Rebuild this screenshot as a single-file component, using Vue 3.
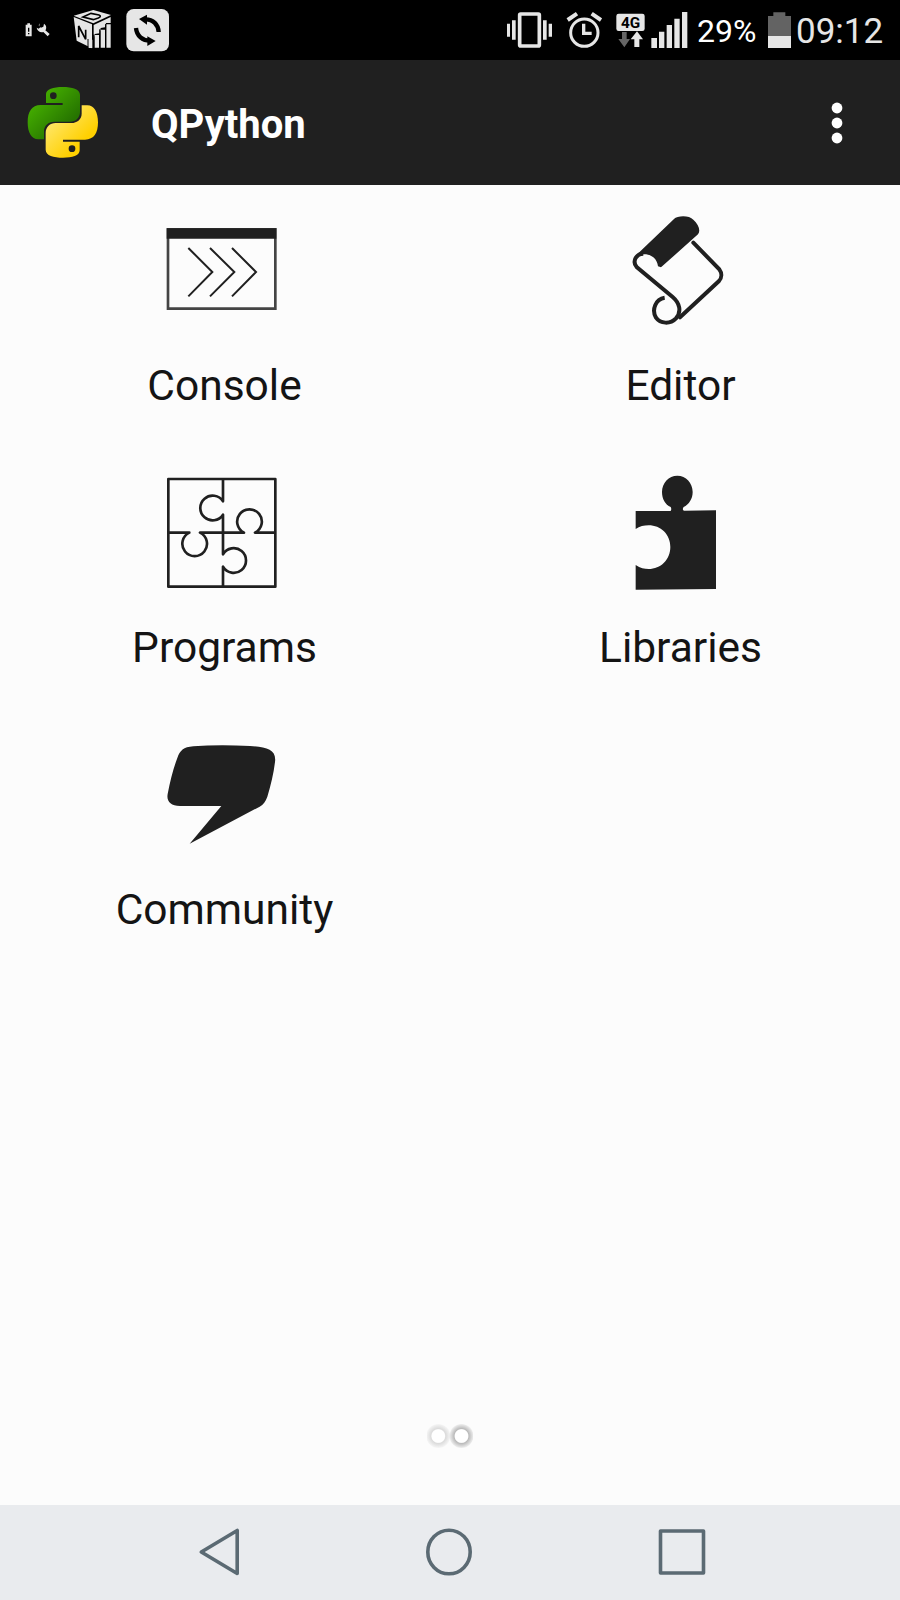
<script setup>
const tiles = [
	{ id: 'console', label: 'Console', viewBox: '60 -30 447 390' },
	{ id: 'editor', label: 'Editor', viewBox: '18 0 447 390' },
	{ id: 'programs', label: 'Programs', viewBox: '90 6 447 390' },
	{ id: 'libraries', label: 'Libraries', viewBox: '48 6 447 390' },
	{ id: 'community', label: 'Community', viewBox: '150 -18 447 390' },
];
</script>

<template>
	<div class="screen">
		<div class="status-bar">
			<div class="status-left">
				<svg class="battery-tool" viewBox="72 0 78 180">
					<path d="M77 74h5v-4h8v4h5v35H77z" fill="#e6e6e6" />
					<path d="M84 83h4v12h-4zM84 99h4v4h-4z" fill="#000" />
					<path
						d="M119 70l-1 9 5 4 7-3 2-9c8 5 8 14 4 20l13 11-6 7-13-13c-9 3-18-3-20-13l6 3 5-4-5-6z"
						fill="#e6e6e6"
					/>
				</svg>
				<svg class="cube" viewBox="219 0 117 180">
					<path d="M221 47l59-17 53 15-53 25z" fill="#e6e6e6" />
					<path d="M221 51l55 22v72l-46-23z" fill="#e6e6e6" />
					<path
						d="M281 75l51-24v18h-14l-3 13-13 2-3 16-15 2-3 14z"
						fill="#e6e6e6"
					/>
					<path
						d="M265 119h12v25h-12zM284 105h13v38h-13zM302 89h13v54h-13zM319 73h13v70h-13z"
						fill="#e6e6e6"
					/>
					<path
						d="M249 51l24-11 24 5c6 2 5 6-2 9l-15 5z"
						fill="none"
						stroke="#000"
						stroke-width="5"
					/>
					<path d="M236 112V78l21 40V89" fill="none" stroke="#000" stroke-width="5" />
					<path d="M264 117v28M281 104v40M299 88v56M317 72v72" stroke="#000" stroke-width="3" />
				</svg>
				<svg class="sync" viewBox="378 0 129 180">
					<rect x="379" y="27" width="128" height="127" rx="22" fill="#e6e6e6" />
					<path
						d="M437 58c22 0 38 16 39 38M450 122c-22 0-40-14-42-38"
						fill="none"
						stroke="#000"
						stroke-width="13"
					/>
					<path d="M417 57l24-13v30zM467 123l-25-14v29z" fill="#000" />
				</svg>
			</div>
			<div class="status-right">
				<svg class="vibrate" viewBox="48 0 141 180">
					<rect x="89" y="42" width="59" height="96" rx="3" fill="none" stroke="#e6e6e6" stroke-width="11" />
					<path
						d="M51 71h9v39h-9zM66 61h11v58H66zM159 61h11v58h-11zM176 71h10v39h-10z"
						fill="#e6e6e6"
					/>
				</svg>
				<svg class="alarm" viewBox="228 0 108 180">
					<circle cx="283" cy="98" r="41" fill="none" stroke="#e6e6e6" stroke-width="9" />
					<path d="M281 71v29h24" fill="none" stroke="#e6e6e6" stroke-width="10" />
					<path d="M233 60l28-19M333 60l-28-19" stroke="#e6e6e6" stroke-width="12" />
				</svg>
				<svg class="network" viewBox="378 0 87 180">
					<rect x="379" y="41" width="85" height="52" rx="7" fill="#e6e6e6" />
					<text x="422" y="83" text-anchor="middle" class="network-text">4G</text>
					<path d="M396 96h14v21h10l-17 25-18-25h11z" fill="#666" />
					<path d="M433 141h15v-23h11l-18-24-19 24h11z" fill="#e6e6e6" />
				</svg>
				<svg class="signal" viewBox="483 0 111 180">
					<path
						d="M484 114h17v30h-17zM507 95h16v49h-16zM530 75h16v69h-16zM553 56h16v88h-16zM576 36h16v108h-16z"
						fill="#e6e6e6"
					/>
				</svg>
				<span class="percent">29%</span>
				<svg class="battery" viewBox="264 0 69 180">
					<path d="M264 48h16V37h36v11h17v60h-69z" fill="#636363" />
					<path d="M264 108h69v36h-69z" fill="#e6e6e6" />
				</svg>
				<span class="clock">09:12</span>
			</div>
		</div>

		<div class="app-bar">
			<svg class="logo" viewBox="72 0 240 375">
				<defs>
					<linearGradient id="green" x1="0" y1="0" x2="1" y2="1">
						<stop offset="0.25" stop-color="#42a900" />
						<stop offset="0.75" stop-color="#267300" />
					</linearGradient>
					<linearGradient id="yellow" x1="1" y1="1" x2="0" y2="0">
						<stop offset="0.25" stop-color="#ffe45c" />
						<stop offset="0.7" stop-color="#ffd000" />
					</linearGradient>
				</defs>
				<path
					d="M138 129v-26c0-16 22-22 50-22s52 6 52 24v50c0 18-13 30-30 30h-47c-18 0-31 12-31 28v25h-17c-21 0-32-21-32-51 0-32 12-52 39-52h66v-6z"
					fill="url(#green)"
				/>
				<path
					d="M138 129v-26c0-16 22-22 50-22s52 6 52 24v50c0 18-13 30-30 30h-47c-18 0-31 12-31 28v25h-17c-21 0-32-21-32-51 0-32 12-52 39-52h66v-6z"
					fill="url(#yellow)"
					transform="rotate(180 188.5 187)"
				/>
				<circle cx="160" cy="107" r="10" fill="#202020" />
				<circle cx="216" cy="266" r="10" fill="#202020" />
			</svg>
			<h1 class="title">QPython</h1>
			<svg class="overflow" viewBox="0 0 12 42">
				<circle cx="6" cy="6" r="5.4" />
				<circle cx="6" cy="21" r="5.4" />
				<circle cx="6" cy="36" r="5.4" />
			</svg>
		</div>

		<div class="content">
			<div class="grid">
				<div v-for="tile in tiles" :key="tile.id" class="tile">
					<svg class="tile-icon" :viewBox="tile.viewBox">
						<g v-if="tile.id === 'console'" fill="none" stroke="#202020">
							<path d="M114 58h322v238H114z" stroke="#444" stroke-width="8" />
							<path d="M110 55h329v31H110z" fill="#202020" stroke="none" />
							<path
								d="M175 114l72 72-72 73M240 114l73 72-73 73M306 114l72 72-72 73"
								stroke-width="6"
							/>
						</g>
						<g v-else-if="tile.id === 'editor'" fill="none" stroke="#202020">
							<path
								d="M104 170L222 57c10-11 46-12 58 2 15 14 23 32 14 44L183 202l-9-3c-2-24-22-39-48-36z"
								fill="#202020"
								stroke="none"
							/>
							<path
								d="M130 161c-20 0-35 22-20 40l108 90c22 19 27 44 10 64-17 18-47 17-60-2-14-24-1-56 26-60"
								stroke-width="12"
							/>
							<path
								d="M280 128l78 80c8 11 8 25-1 35L240 352"
								stroke-width="12"
								stroke-linecap="round"
							/>
						</g>
						<g v-else-if="tile.id === 'programs'" fill="none" stroke="#202020" stroke-width="8">
							<path d="M145 57h321v323H145z" stroke-linejoin="round" />
							<path
								d="M309 57v67A37 37 0 1 0 309 164v119A37 37 0 1 1 309 320v60"
								stroke-linejoin="round"
							/>
							<path
								d="M145 218h63A37 37 0 1 0 240 218h132A37 37 0 1 1 405 218h61"
								stroke-linejoin="round"
							/>
						</g>
						<path
							v-else-if="tile.id === 'libraries'"
							d="M137 153h103c4 0 5-8 2-12-16-7-26-24-26-45 0-27 20-49 46-49s46 22 46 49c0 21-11 37-27 45-4 4-3 11 2 11l95-1v236l-241 2v-74c14 9 26 12 39 12 36 0 65-28 65-66s-29-65-65-65c-14 0-27 3-39 11z"
							fill="#202020"
						/>
						<path
							v-else
							d="M280 49q75-6 170-1c51 3 80 11 75 48-4 35-13 71-23 104-5 15-12 23-23 30L269 341l95-113H240c-29 0-41-15-37-36 8-41 17-77 29-108 8-22 18-33 48-35z"
							fill="#202020"
						/>
					</svg>
					<span class="tile-label">{{ tile.label }}</span>
				</div>
			</div>
			<svg class="pager" viewBox="0 0 46 24">
				<defs>
					<radialGradient id="dot">
						<stop offset="0.52" stop-color="#bbb" stop-opacity="0" />
						<stop offset="0.62" stop-color="#bbb" />
						<stop offset="1" stop-color="#bbb" stop-opacity="0.2" />
					</radialGradient>
				</defs>
				<circle cx="11.3" cy="12" r="12" fill="url(#dot)" opacity="0.5" />
				<circle cx="11.3" cy="12" r="6.6" fill="#fff" />
				<circle cx="34.5" cy="12" r="12" fill="url(#dot)" />
				<circle cx="34.5" cy="12" r="6.6" fill="#fff" />
			</svg>
		</div>

		<div class="nav-bar">
			<svg class="nav-back" viewBox="0 0 42 50">
				<path d="M39.2 3.5v43L3.3 25z" />
			</svg>
			<svg class="nav-home" viewBox="0 0 46 50">
				<ellipse cx="23" cy="25" rx="21.2" ry="21.8" />
			</svg>
			<svg class="nav-recent" viewBox="0 0 48 50">
				<path d="M2.5 4h43v42h-43z" />
			</svg>
		</div>
	</div>
</template>

<style>
body {
	margin: 0;
}
</style>

<style scoped>
.screen {
	width: 900px;
	height: 1600px;
	display: flex;
	flex-direction: column;
	overflow: hidden;
	background-color: #fcfcfc;
	font-family: Roboto, "Liberation Sans", sans-serif;
}

svg {
	display: block;
	flex: none;
}

.status-bar {
	height: 60px;
	flex: none;
	display: flex;
	justify-content: space-between;
	background-color: #000;
	color: #e6e6e6;
}

.status-left,
.status-right {
	display: flex;
	height: 60px;
}

.status-left {
	padding-left: 24px;
}

.battery-tool {
	width: 26px;
	height: 60px;
}

.cube {
	width: 39px;
	height: 60px;
	margin-left: 23px;
}

.sync {
	width: 43px;
	height: 60px;
	margin-left: 14px;
}

.vibrate {
	width: 47px;
	height: 60px;
}

.alarm {
	width: 36px;
	height: 60px;
	margin-left: 13px;
}

.network {
	width: 29px;
	height: 60px;
	margin-left: 14px;
}

.network-text {
	font-size: 46px;
	font-weight: 700;
	fill: #000;
}

.signal {
	width: 37px;
	height: 60px;
	margin-left: 6px;
}

.percent {
	width: 71px;
	padding-left: 9px;
	font-size: 32px;
	line-height: 63px;
	color: #fff;
}

.battery {
	width: 23px;
	height: 60px;
}

.clock {
	width: 104px;
	padding-left: 5px;
	font-size: 35px;
	line-height: 64px;
}

.app-bar {
	height: 125px;
	flex: none;
	display: flex;
	align-items: center;
	box-sizing: border-box;
	padding: 0 57px 0 24px;
	background-color: #202020;
}

.logo {
	width: 80px;
	height: 125px;
}

.title {
	margin: 5px 0 0 47px;
	font-size: 40px;
	font-weight: 700;
	line-height: 48px;
	color: #fff;
}

.overflow {
	width: 12px;
	height: 42px;
	margin-left: auto;
	fill: #fff;
}

.content {
	flex: 1;
	display: flex;
	flex-direction: column;
	justify-content: space-between;
	align-items: center;
	padding-bottom: 57px;
}

.grid {
	width: 900px;
	display: grid;
	grid-template-columns: 449px 439px;
	grid-auto-rows: 262px;
	column-gap: 12px;
}

.tile {
	display: flex;
	flex-direction: column;
	align-items: center;
	padding-top: 15px;
}

.tile-icon {
	width: 149px;
	height: 130px;
}

.tile-label {
	margin-top: 31px;
	font-size: 42.5px;
	line-height: 50px;
	color: #141414;
}

.pager {
	width: 46px;
	height: 24px;
}

.nav-bar {
	height: 95px;
	flex: none;
	display: flex;
	align-items: center;
	box-sizing: border-box;
	padding: 0 194px 1px 198px;
	justify-content: space-between;
	background-color: #e9ebee;
}

.nav-bar svg {
	height: 50px;
	fill: none;
	stroke: #5b6a73;
	stroke-width: 3.6;
	stroke-linejoin: round;
}

.nav-back {
	width: 42px;
}

.nav-home {
	width: 46px;
}

.nav-recent {
	width: 48px;
}
</style>
